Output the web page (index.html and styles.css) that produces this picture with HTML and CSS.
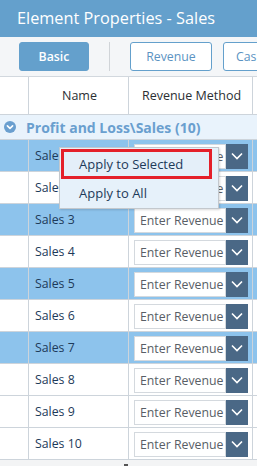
FILE: index.html
```html
<!DOCTYPE html>
<html>
<head>
<meta charset="utf-8">
<link rel="stylesheet" href="styles.css">
</head>
<body>
<div class="panel">
  <div class="titlebar">Element Properties - Sales</div>
  <div class="toolbar">
    <button class="btn btn-primary">Basic</button>
    <span class="sep"></span>
    <button class="btn btn-outline btn-rev">Revenue</button>
    <button class="btn btn-outline btn-cash">Cash</button>
  </div>
  <div class="grid">
    <div class="row head">
      <div class="cell"></div>
      <div class="cell center">Name</div>
      <div class="cell center">Revenue Method</div>
      <div class="cell"></div>
    </div>
    <div class="group">
      <svg class="gicon" width="12" height="12" viewBox="0 0 12 12"><circle cx="6" cy="6" r="6" fill="#6a9fcf"/><path d="M3.4 4.8 L6 7.3 L8.6 4.8" fill="none" stroke="#fff" stroke-width="1.6" stroke-linecap="round" stroke-linejoin="round"/></svg>
      <span>Profit and Loss\Sales (10)</span>
    </div>
    <div class="row sel"><div class="cell"></div><div class="cell name">Sales 1</div><div class="cell rev"><div class="combo"><span class="inp">Enter Revenue</span><span class="dd"><svg width="12" height="8" viewBox="0 0 12 8"><path d="M1 1.5 L6 6.5 L11 1.5" fill="none" stroke="#fff" stroke-width="1.6"/></svg></span></div></div><div class="cell"></div></div>
    <div class="row"><div class="cell"></div><div class="cell name">Sales 2</div><div class="cell rev"><div class="combo"><span class="inp">Enter Revenue</span><span class="dd"><svg width="12" height="8" viewBox="0 0 12 8"><path d="M1 1.5 L6 6.5 L11 1.5" fill="none" stroke="#fff" stroke-width="1.6"/></svg></span></div></div><div class="cell"></div></div>
    <div class="row sel"><div class="cell"></div><div class="cell name">Sales 3</div><div class="cell rev"><div class="combo"><span class="inp">Enter Revenue</span><span class="dd"><svg width="12" height="8" viewBox="0 0 12 8"><path d="M1 1.5 L6 6.5 L11 1.5" fill="none" stroke="#fff" stroke-width="1.6"/></svg></span></div></div><div class="cell"></div></div>
    <div class="row"><div class="cell"></div><div class="cell name">Sales 4</div><div class="cell rev"><div class="combo"><span class="inp">Enter Revenue</span><span class="dd"><svg width="12" height="8" viewBox="0 0 12 8"><path d="M1 1.5 L6 6.5 L11 1.5" fill="none" stroke="#fff" stroke-width="1.6"/></svg></span></div></div><div class="cell"></div></div>
    <div class="row sel"><div class="cell"></div><div class="cell name">Sales 5</div><div class="cell rev"><div class="combo"><span class="inp">Enter Revenue</span><span class="dd"><svg width="12" height="8" viewBox="0 0 12 8"><path d="M1 1.5 L6 6.5 L11 1.5" fill="none" stroke="#fff" stroke-width="1.6"/></svg></span></div></div><div class="cell"></div></div>
    <div class="row"><div class="cell"></div><div class="cell name">Sales 6</div><div class="cell rev"><div class="combo"><span class="inp">Enter Revenue</span><span class="dd"><svg width="12" height="8" viewBox="0 0 12 8"><path d="M1 1.5 L6 6.5 L11 1.5" fill="none" stroke="#fff" stroke-width="1.6"/></svg></span></div></div><div class="cell"></div></div>
    <div class="row sel"><div class="cell"></div><div class="cell name">Sales 7</div><div class="cell rev"><div class="combo"><span class="inp">Enter Revenue</span><span class="dd"><svg width="12" height="8" viewBox="0 0 12 8"><path d="M1 1.5 L6 6.5 L11 1.5" fill="none" stroke="#fff" stroke-width="1.6"/></svg></span></div></div><div class="cell"></div></div>
    <div class="row"><div class="cell"></div><div class="cell name">Sales 8</div><div class="cell rev"><div class="combo"><span class="inp">Enter Revenue</span><span class="dd"><svg width="12" height="8" viewBox="0 0 12 8"><path d="M1 1.5 L6 6.5 L11 1.5" fill="none" stroke="#fff" stroke-width="1.6"/></svg></span></div></div><div class="cell"></div></div>
    <div class="row"><div class="cell"></div><div class="cell name">Sales 9</div><div class="cell rev"><div class="combo"><span class="inp">Enter Revenue</span><span class="dd"><svg width="12" height="8" viewBox="0 0 12 8"><path d="M1 1.5 L6 6.5 L11 1.5" fill="none" stroke="#fff" stroke-width="1.6"/></svg></span></div></div><div class="cell"></div></div>
    <div class="row"><div class="cell"></div><div class="cell name">Sales 10</div><div class="cell rev"><div class="combo"><span class="inp">Enter Revenue</span><span class="dd"><svg width="12" height="8" viewBox="0 0 12 8"><path d="M1 1.5 L6 6.5 L11 1.5" fill="none" stroke="#fff" stroke-width="1.6"/></svg></span></div></div><div class="cell"></div></div>
    <div class="hscroll"><span class="thumb"></span></div>
    <div class="menu">
      <div class="mi active">Apply to Selected</div>
      <div class="mi">Apply to All</div>
    </div>
  </div>
</div>
</body>
</html>
```
FILE: styles.css
```css
* { box-sizing: border-box; }
html, body { margin: 0; padding: 0; }
body {
  width: 257px;
  height: 466px;
  overflow: hidden;
  background: #fff;
  font-family: "Open Sans", "Liberation Sans", sans-serif;
}
.panel { width: 257px; overflow: hidden; }
.titlebar {
  height: 37px;
  background: #64a0cc;
  color: #fff;
  font-size: 16.3px;
  line-height: 36px;
  padding-left: 17px;
  white-space: nowrap;
}
.toolbar {
  height: 40px;
  background: #f4f6f8;
  border-bottom: 1px solid #d2d8de;
  display: flex;
  align-items: center;
  padding-left: 19px;
  white-space: nowrap;
  overflow: hidden;
}
.btn {
  flex: none;
  height: 29px;
  border-radius: 3px;
  font-family: "Open Sans", sans-serif;
  font-size: 12.3px;
  padding: 0;
  margin-top: -1px;
}
.btn-primary {
  width: 70px;
  background: #64a0cc;
  border: 1px solid #64a0cc;
  color: #fff;
  font-weight: 600;
}
.sep {
  flex: none;
  width: 1px;
  height: 29px;
  background: #d0d4d8;
  margin: -1px 20px 0 20px;
}
.btn-outline {
  background: #fff;
  border: 1px solid #64a0cc;
  color: #5b93c2;
}
.btn-rev { width: 82px; }
.btn-cash { width: 60px; margin-left: 11px; text-align: left; padding-left: 12px; }
.grid { position: relative; }
.row {
  display: grid;
  grid-template-columns: 29px 100px 124px 20px;
  height: 32px;
  border-bottom: 1px solid #cdd4db;
  background: #fff;
}
.row.sel { background: #8dc3ec; }
.cell {
  border-right: 1px solid #cdd4db;
  display: flex;
  align-items: center;
  min-width: 0;
}
.row.head {
  height: 38px;
  font-size: 12.5px;
  color: #2b2f33;
  background: #fff;
}
.center { justify-content: center; }
.head .cell:nth-child(2) { padding-left: 2px; }
.head .cell:nth-child(3) { padding-left: 2px; }
.name {
  padding-left: 6px;
  font-size: 12.3px;
  color: #1d3a59;
  white-space: nowrap;
}
.rev { padding-left: 5px; }
.combo {
  display: flex;
  height: 25px;
  margin-top: 1px;
}
.inp {
  width: 92px;
  height: 25px;
  background: #fff;
  border: 1px solid #d4d9de;
  font-size: 12.3px;
  color: #585e66;
  line-height: 23px;
  padding-left: 5px;
  white-space: nowrap;
  overflow: hidden;
}
.dd {
  width: 22px;
  height: 25px;
  background: #4a6886;
  display: flex;
  align-items: center;
  justify-content: center;
}
.group {
  height: 25px;
  background: #e9f3fc;
  display: flex;
  align-items: center;
  padding-left: 4px;
  gap: 10px;
  font-size: 14px;
  font-weight: 700;
  color: #6a9fcf;
  border-bottom: 1px solid #cdd4db;
  white-space: nowrap;
}
.gicon { flex: none; }
.hscroll {
  height: 6px;
  background: #f3f4f5;
  position: relative;
}
.thumb {
  position: absolute;
  left: 124px;
  top: 4px;
  width: 4px;
  height: 2px;
  background: #555;
}
.menu {
  position: absolute;
  left: 59px;
  top: 70px;
  width: 160px;
  background: #e6f1fa;
  border: 1px solid #c3c8cd;
  box-shadow: 1px 1px 2px rgba(0,0,0,0.15);
  padding: 1px;
}
.mi {
  height: 28px;
  font-size: 13px;
  color: #1d3a59;
  display: flex;
  align-items: center;
  padding-left: 18px;
  white-space: nowrap;
}
.mi.active {
  height: 30px;
  width: 151px;
  border: 3px solid #e4202a;
  padding-left: 15px;
  background: #e4eff9;
}
```
